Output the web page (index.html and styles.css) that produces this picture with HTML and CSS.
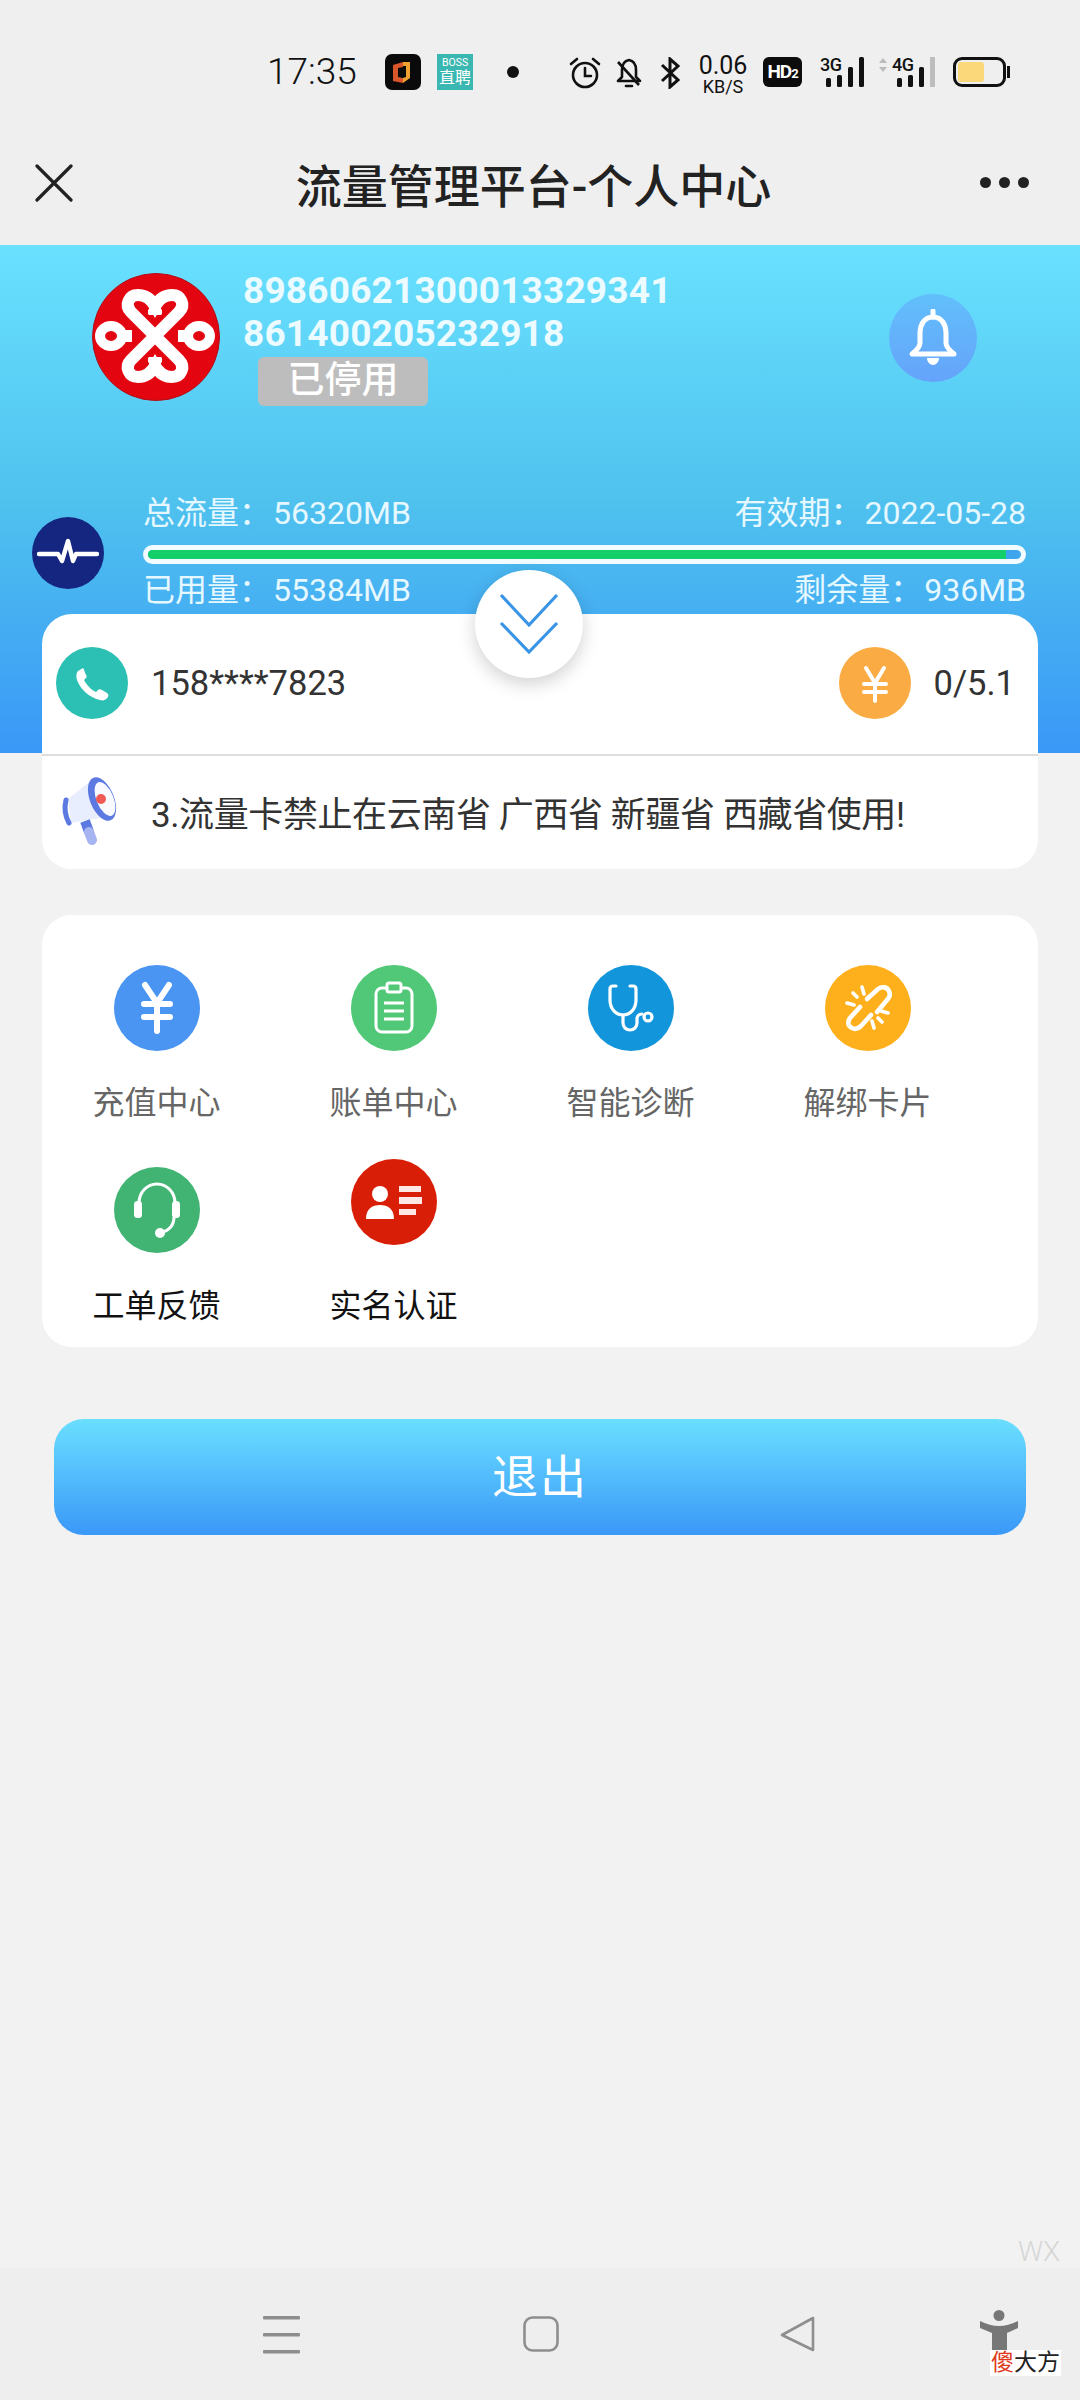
FILE: index.html
```html
<!DOCTYPE html>
<html lang="zh-CN">
<head>
    <meta charset="UTF-8">
    <meta name="viewport" content="width=device-width, initial-scale=1.0">
    <title>流量管理平台-个人中心</title>
    <link rel="stylesheet" href="styles.css">
</head>
<body>
    <div class="statusbar">
        <span class="clock">17:35</span>
        <svg class="app-icon" viewBox="0 0 36 36"><rect width="36" height="36" rx="7" fill="#0a0a0a"/><path d="M8 11l10-3v21l-10-2z" fill="#d9552a"/><path d="M13 14l5-1v11l-5-1z" fill="#0a0a0a"/><path d="M18 8h7v16l-7 5v-5l3-1V12h-3z" fill="#f0a030"/></svg>
        <div class="boss-icon"><span class="boss-top">BOSS</span><span class="boss-bottom">直聘</span></div>
        <span class="status-dot"></span>
        <svg class="alarm" viewBox="0 0 32 32" fill="none" stroke="#111" stroke-width="2.6"><circle cx="16" cy="18" r="12"/><path d="M16 11v8h6M2 7l6-5M30 7l-6-5" stroke-linecap="round"/></svg>
        <svg class="bell-off" viewBox="0 0 26 32" fill="none" stroke="#111" stroke-width="2.6"><path d="M13 3c-5 1-7 5-7 10v7l-4 4h22l-4-4v-7c0-5-2-9-7-10z" stroke-linejoin="round"/><path d="M2 5l21 23"/><path d="M10 29h6" stroke-linecap="round"/></svg>
        <svg class="bt" viewBox="0 0 23 32" fill="none" stroke="#111" stroke-width="3"><path d="M3 8l16 15-8 7V2l8 7L3 24"/></svg>
        <div class="speed"><span class="speed-num">0.06</span><span class="speed-unit">KB/S</span></div>
        <span class="hd">HD<small>2</small></span>
        <div class="signal signal-3g">
            <span class="net">3G</span>
            <svg viewBox="0 0 45 30" class="bars"><g fill="#111"><rect x="6" y="21" width="5" height="9" rx="1.5"/><rect x="17" y="18" width="5" height="12" rx="1.5"/><rect x="28" y="10" width="5" height="20" rx="1.5"/><rect x="39" y="0" width="5" height="30" rx="1.5"/></g></svg>
        </div>
        <div class="signal signal-4g">
            <svg class="net-arrows" viewBox="0 0 8 14" fill="#bbb"><path d="M4 0l4 5H0zM4 14l4-5H0z"/></svg>
            <span class="net">4G</span>
            <svg viewBox="0 0 56 30" class="bars"><g fill="#111"><rect x="18" y="21" width="5" height="9" rx="1.5"/><rect x="29" y="18" width="5" height="12" rx="1.5"/><rect x="40" y="10" width="5" height="20" rx="1.5"/></g><rect x="51" y="0" width="5" height="30" fill="#bdbdbd"/></svg>
        </div>
        <div class="battery"><span class="battery-fill"></span></div>
    </div>

    <header class="topbar">
        <svg class="close-icon" viewBox="0 0 38 38" fill="none" stroke="#222" stroke-width="3.2" stroke-linecap="round"><path d="M2 2l34 34M36 2L2 36"/></svg>
        <h1 class="page-title">流量管理平台-个人中心</h1>
        <div class="more"><span></span><span></span><span></span></div>
    </header>

    <section class="hero">
        <div class="hero-top">
            <svg class="logo" viewBox="0 0 128 128">
                <circle cx="64" cy="64" r="63.5" fill="#e30611" stroke="#b01018"/>
                <g fill="none" stroke="#fff" stroke-width="12" transform="translate(-1 -1)">
                    <path d="M88 88L40 40C33 33 38 23 47 23C54 23 60 27 64 34C68 27 74 23 81 23C90 23 95 33 88 40L40 88C33 95 38 105 47 105C54 105 60 101 64 94C68 101 74 105 81 105C90 105 95 95 88 88Z"/>
                    <ellipse cx="20" cy="64" rx="11" ry="10" stroke-width="10"/>
                    <ellipse cx="108" cy="64" rx="11" ry="10" stroke-width="10"/>
                    <path d="M30 64h11M87 64h11M64 34v9M64 85v9"/>
                    <path d="M57 40h14M57 88h14" stroke-width="5"/>
                </g>
            </svg>
            <div class="sim-info">
                <div class="sim-num">89860621300013329341</div>
                <div class="sim-num">861400205232918</div>
                <span class="sim-state">已停用</span>
            </div>
            <div class="bell-btn">
                <svg viewBox="0 0 50 58" fill="none" stroke="#fff" stroke-width="5" stroke-linejoin="round"><path d="M25 8c-9 0-13 8-13 16v10c0 4-3 7-8 11h42c-5-4-8-7-8-11V24c0-8-4-16-13-16z"/><path d="M25 2v6" stroke-linecap="round"/><path d="M19 49c0 4 3 7 6 7s6-3 6-7z" fill="#fff" stroke="none"/></svg>
            </div>
        </div>

        <div class="usage">
            <svg class="pulse" viewBox="0 0 72 72"><circle cx="36" cy="36" r="36" fill="#152680"/><path d="M7 37h19l4 7 6-20 5 20 3-7h21" fill="none" stroke="#fff" stroke-width="4.4" stroke-linejoin="round" stroke-linecap="round"/></svg>
            <div class="usage-body">
                <div class="usage-row">
                    <span>总流量&#xFF1A;<span class="usage-val">56320MB</span></span>
                    <span>有效期&#xFF1A;<span class="usage-val">2022-05-28</span></span>
                </div>
                <div class="progress"><div class="progress-fill" style="width: 98.3%"></div></div>
                <div class="usage-row">
                    <span>已用量&#xFF1A;<span class="usage-val">55384MB</span></span>
                    <span>剩余量&#xFF1A;<span class="usage-val">936MB</span></span>
                </div>
            </div>
        </div>

        <div class="collapse-btn">
            <svg viewBox="0 0 108 108" fill="none" stroke="#3a94e6" stroke-width="3.2"><path d="M26 25l28 30 28-30M26 53l28 29 28-29"/></svg>
        </div>
    </section>

    <main class="content">
        <section class="card card-sim">
            <div class="phone-row">
                <svg class="round-icon" viewBox="0 0 72 72"><circle cx="36" cy="36" r="36" fill="#2cbfb3"/><path fill="#fff" d="M27 21l-5 3c-2 2-2 6-1 9 3 9 13 18 23 20 3 1 6 0 8-3 1-2 0-3-1-4l-5-3c-2-1-3-1-4 0l-2 2c-5-2-10-8-12-12l2-2c1-1 1-2 0-3l-2-5c0-1-1-2-1-2z"/></svg>
                <span class="phone-num">158****7823</span>
                <svg class="round-icon balance-icon" viewBox="0 0 72 72"><circle cx="36" cy="36" r="36" fill="#fbab43"/><path d="M27 21l9 15 9-15M25 37h22M25 45h22M36 36v18" fill="none" stroke="#fff" stroke-width="4" stroke-linecap="round"/></svg>
                <span class="balance">0/5.1</span>
            </div>
            <div class="notice-row">
                <svg class="horn" viewBox="0 0 58 70">
                    <path d="M33 3L8 23l3 24 41-7z" fill="#e8eefd"/>
                    <path d="M6 24Q3 36 9 47" fill="none" stroke="#5b79e0" stroke-width="5" stroke-linecap="round"/>
                    <path d="M25 45l4 11" stroke="#5b79e0" stroke-width="10"/>
                    <path d="M29 56l3 8" stroke="#a6b4f2" stroke-width="10" stroke-linecap="round"/>
                    <ellipse cx="42" cy="23" rx="12" ry="23" fill="#5b79e0" transform="rotate(-22 42 23)"/>
                    <ellipse cx="45" cy="23" rx="8.5" ry="18" fill="#f7f9ff" transform="rotate(-22 45 23)"/>
                    <circle cx="41" cy="23" r="5" fill="#ef5a55"/>
                </svg>
                <span class="notice-text">3.流量卡禁止在云南省 广西省 新疆省 西藏省使用!</span>
            </div>
        </section>

        <section class="card tiles">
            <div class="tile">
                <svg class="tile-icon" viewBox="0 0 86 86"><circle cx="43" cy="43" r="43" fill="#4a95f2"/><path d="M31 20l12 18 12-18M30 39h26M30 52h26M43 39v27" fill="none" stroke="#fff" stroke-width="6" stroke-linecap="round"/></svg>
                <span class="tile-label">充值中心</span>
            </div>
            <div class="tile">
                <svg class="tile-icon" viewBox="0 0 86 86"><circle cx="43" cy="43" r="43" fill="#51c878"/><g fill="none" stroke="#fff" stroke-width="3"><rect x="25" y="23" width="36" height="44" rx="6"/><rect x="36" y="18" width="14" height="9" rx="2" fill="#51c878"/><path d="M33 38h20M33 46h20M33 54h20"/></g></svg>
                <span class="tile-label">账单中心</span>
            </div>
            <div class="tile">
                <svg class="tile-icon" viewBox="0 0 86 86"><circle cx="43" cy="43" r="43" fill="#1295da"/><g fill="none" stroke="#fff" stroke-width="3.2" stroke-linecap="round"><path d="M28 21h-3c-2 0-3 1-3 3v11c0 9 6 15 13 15s13-6 13-15V24c0-2-1-3-3-3h-3"/><path d="M35 50v8c0 4 3 7 7 7s7-3 7-7v-4c0-3 2-5 5-5"/><circle cx="60" cy="52" r="4"/></g></svg>
                <span class="tile-label">智能诊断</span>
            </div>
            <div class="tile">
                <svg class="tile-icon" viewBox="0 0 86 86"><circle cx="43" cy="43" r="43" fill="#fdb01c"/><g fill="none" stroke="#fff" stroke-width="4.6" stroke-linecap="round"><path d="M42 34L53 24C57 21 62 22 64 26C66 30 64 33 62 35L52 47"/><path d="M35 42L25 53C22 57 23 61 27 63C31 65 34 63 36 61L46 50"/><path d="M28 28l4 4M37 22l2 7M22 38l7 2M63 48l-7-2M57 57l-4-4M49 63l-2-7" stroke-width="3.6"/></g></svg>
                <span class="tile-label">解绑卡片</span>
            </div>
            <div class="tile tile-low">
                <svg class="tile-icon" viewBox="0 0 86 86"><circle cx="43" cy="43" r="43" fill="#41b474"/><path d="M25 36a18 19 0 0 1 36 0M60 50c0 9-6 14-14 16" fill="none" stroke="#fff" stroke-width="3"/><rect x="20" y="34" width="8" height="17" rx="3.5" fill="#fff"/><rect x="58" y="34" width="8" height="17" rx="3.5" fill="#fff"/><circle cx="46" cy="66" r="5" fill="#fff"/></svg>
                <span class="tile-label tile-label-dark">工单反馈</span>
            </div>
            <div class="tile tile-id">
                <svg class="tile-icon" viewBox="0 0 86 86"><circle cx="43" cy="43" r="43" fill="#d81e06"/><circle cx="29" cy="35" r="8" fill="#fff"/><path d="M15 60c0-10 6-14 14-14s14 4 14 14z" fill="#fff"/><path d="M48 27h22v6H48zM48 38h23v7H48zM48 50h17v6H48z" fill="#fde8e6"/></svg>
                <span class="tile-label tile-label-dark">实名认证</span>
            </div>
        </section>

        <button class="logout" type="button">退出</button>
    </main>

    <span class="mark">WX</span>

    <nav class="navbar">
        <svg class="nav-menu" viewBox="0 0 37 38" fill="#8e8e8e"><rect y="0" width="37" height="3.4" rx="1"/><rect y="17" width="37" height="3.4" rx="1"/><rect y="34" width="37" height="3.4" rx="1"/></svg>
        <svg class="nav-home" viewBox="0 0 36 36" fill="none" stroke="#8e8e8e" stroke-width="2.6"><rect x="1.5" y="1.5" width="33" height="33" rx="8"/></svg>
        <svg class="nav-back" viewBox="0 0 36 36" fill="none" stroke="#8e8e8e" stroke-width="2.6" stroke-linejoin="round"><path d="M33 2v32L2 19z"/></svg>
    </nav>

    <div class="badge-person">
        <svg viewBox="0 0 38 46" fill="#777"><ellipse cx="19" cy="5.5" rx="5.5" ry="5.5"/><path d="M0 11q10 5 19 5t19-5v7l-11 5v23H12V23L0 18z"/></svg>
        <span class="badge-name"><b>傻</b>大方</span>
    </div>
</body>
</html>
```

FILE: styles.css
```css
* {
    box-sizing: border-box;
}

body {
    margin: 0;
    width: 1080px;
    height: 2400px;
    overflow: hidden;
    position: relative;
    display: flex;
    flex-direction: column;
    background: #f2f2f2;
    color: #333;
    font-family: Roboto, "Noto Sans CJK SC", sans-serif;
}

/* status bar */
.statusbar {
    height: 120px;
    flex: none;
    padding: 54px 0 0 267px;
    display: flex;
    align-items: flex-start;
    background: #efefef;
    color: #111;
}

.clock {
    width: 118px;
    font-size: 37px;
    line-height: 36px;
    font-weight: 300;
}

.app-icon {
    width: 36px;
    height: 36px;
}

.boss-icon {
    width: 36px;
    height: 36px;
    margin-left: 16px;
    background: #3bb7b2;
    color: #fff;
    display: flex;
    flex-direction: column;
    align-items: center;
    justify-content: center;
}

.boss-top {
    font-size: 10.5px;
    line-height: 12px;
}

.boss-bottom {
    font-size: 16px;
    line-height: 18px;
}

.status-dot {
    width: 12px;
    height: 12px;
    margin: 12px 0 0 34px;
    border-radius: 50%;
    background: #111;
}

.alarm {
    width: 32px;
    height: 32px;
    margin: 3px 0 0 50px;
}

.bell-off {
    width: 26px;
    height: 32px;
    margin: 3px 0 0 15px;
}

.bt {
    width: 23px;
    height: 32px;
    margin: 3px 0 0 17px;
}

.speed {
    width: 52px;
    margin-left: 15px;
    display: flex;
    flex-direction: column;
    align-items: center;
}

.speed-num {
    font-size: 25px;
    line-height: 24px;
}

.speed-unit {
    font-size: 18px;
    line-height: 17px;
}

.hd {
    width: 39px;
    height: 30px;
    margin: 3px 0 0 14px;
    border-radius: 6px;
    background: #0c0c0c;
    color: #fff;
    font-size: 19px;
    line-height: 30px;
    font-weight: 700;
    letter-spacing: -1px;
    text-align: center;
}

.hd small {
    font-size: 13px;
}

.signal {
    position: relative;
    height: 30px;
    margin-top: 3px;
}

.signal-3g {
    width: 45px;
    margin-left: 18px;
}

.signal-4g {
    width: 56px;
    margin-left: 14px;
    padding-left: 13px;
}

.net {
    display: block;
    font-size: 18px;
    line-height: 16px;
    font-weight: 500;
    letter-spacing: -0.5px;
}

.net-arrows {
    position: absolute;
    left: 0;
    top: 1px;
    width: 8px;
    height: 14px;
}

.bars {
    position: absolute;
    left: 0;
    top: 0;
    width: 100%;
    height: 30px;
}

.battery {
    width: 53px;
    height: 30px;
    margin: 3px 0 0 18px;
    padding: 2px;
    border: 3px solid #111;
    border-radius: 9px;
    position: relative;
}

.battery::after {
    content: "";
    position: absolute;
    right: -7px;
    top: 6px;
    width: 3px;
    height: 12px;
    background: #111;
}

.battery-fill {
    display: block;
    width: 26px;
    height: 100%;
    border-radius: 3px;
    background: #fbd97a;
}

/* title row */
.topbar {
    height: 125px;
    flex: none;
    padding: 0 51px 0 35px;
    display: flex;
    align-items: center;
    background: #efefef;
}

.close-icon {
    width: 38px;
    height: 38px;
    flex: none;
}

.page-title {
    flex: 1;
    margin: 0;
    padding-left: 14px;
    font-size: 46px;
    font-weight: 500;
    color: #222;
    text-align: center;
}

.more {
    display: flex;
    gap: 8px;
    flex: none;
}

.more span {
    width: 11px;
    height: 11px;
    border-radius: 50%;
    background: #222;
}

/* blue head */
.hero {
    height: 508px;
    flex: none;
    position: relative;
    background: linear-gradient(180deg, #6ae1ff 0%, #4fc2ee 50%, #3a98f7 100%);
    color: #fff;
}

.hero-top {
    display: flex;
    align-items: flex-start;
    padding: 24px 103px 0 92px;
}

.logo {
    width: 128px;
    height: 128px;
    margin-top: 4px;
    flex: none;
}

.sim-info {
    margin-left: 23px;
}

.sim-num {
    font-size: 37px;
    line-height: 43px;
    font-weight: 700;
    letter-spacing: 0.2px;
    color: #ecfbff;
}

.sim-state {
    display: block;
    width: 170px;
    height: 49px;
    margin: 2px 0 0 15px;
    border-radius: 6px;
    background: #bdbdbd;
    font-size: 37px;
    font-weight: 500;
    line-height: 48px;
    text-align: center;
}

.bell-btn {
    width: 88px;
    height: 88px;
    margin: 25px 0 0 auto;
    border-radius: 50%;
    background: linear-gradient(180deg, #62bffb, #65a3fa);
    display: flex;
    align-items: center;
    justify-content: center;
}

.bell-btn svg {
    width: 50px;
    height: 58px;
}

.usage {
    display: flex;
    align-items: center;
    gap: 39px;
    margin-top: 85px;
    padding: 0 54px 0 32px;
}

.pulse {
    width: 72px;
    height: 72px;
    margin-top: 3px;
    flex: none;
}

.usage-body {
    flex: 1;
}

.usage-row {
    display: flex;
    justify-content: space-between;
    font-size: 32px;
    line-height: 44px;
    color: #e6f8ff;
}

.usage-val {
    margin-left: 2px;
}

.progress {
    height: 19px;
    margin: 10px 0 4px;
    border: 5px solid #f2fbff;
    border-radius: 10px;
    overflow: hidden;
    background: #3fa6ee;
}

.progress-fill {
    height: 100%;
    background: #12cf6a;
}

.collapse-btn {
    position: absolute;
    left: 475px;
    top: 325px;
    z-index: 2;
    width: 108px;
    height: 108px;
    border-radius: 50%;
    background: #fff;
    box-shadow: 0 6px 18px rgba(0, 0, 0, 0.18);
}

.collapse-btn svg {
    display: block;
    width: 108px;
    height: 108px;
}

/* cards */
.content {
    position: relative;
    margin-top: -139px;
    padding: 0 42px;
}

.card {
    background: #fff;
    border-radius: 30px;
}

.phone-row {
    height: 142px;
    padding: 0 23px 2px 14px;
    display: flex;
    align-items: center;
    border-bottom: 2px solid #dedede;
}

.round-icon {
    width: 72px;
    height: 72px;
    flex: none;
}

.phone-num {
    margin-left: 23px;
    font-size: 34.5px;
}

.balance-icon {
    margin-left: auto;
}

.balance {
    margin-left: 23px;
    font-size: 34.5px;
}

.notice-row {
    height: 113px;
    padding: 0 0 3px 18px;
    display: flex;
    align-items: center;
}

.horn {
    width: 58px;
    height: 70px;
    flex: none;
}

.notice-text {
    margin-left: 33px;
    font-size: 35px;
    white-space: nowrap;
    letter-spacing: -0.4px;
}

.tiles {
    margin-top: 46px;
    padding: 50px 0 19px;
    display: grid;
    grid-template-columns: repeat(4, 229px);
    column-gap: 8px;
    row-gap: 34px;
}

.tile {
    display: flex;
    flex-direction: column;
    align-items: center;
}

.tile-icon {
    width: 86px;
    height: 86px;
}

.tile-label {
    margin-top: 30px;
    font-size: 32px;
    line-height: 44px;
    color: #666;
}

.tile-label-dark {
    color: #111;
}

.tile-low .tile-icon {
    margin-top: 8px;
}

.tile-low .tile-label {
    margin-top: 31px;
}

.tile-id .tile-label {
    margin-top: 39px;
}

.logout {
    display: block;
    width: 972px;
    height: 116px;
    margin: 72px 0 0 12px;
    padding: 0 0 8px;
    border: none;
    border-radius: 30px;
    background: linear-gradient(180deg, #6adfff, #3a98f8);
    color: #fff;
    font-family: inherit;
    font-size: 46px;
    letter-spacing: 2px;
}

/* bottom */
.mark {
    position: absolute;
    left: 1018px;
    top: 2236px;
    font-size: 28px;
    line-height: 32px;
    font-weight: 300;
    color: #d6d6d6;
}

.navbar {
    height: 132px;
    margin-top: auto;
    flex: none;
    display: flex;
    align-items: flex-start;
    padding: 48px 0 0 263px;
    background: #eeeeee;
}

.nav-menu {
    width: 37px;
    height: 38px;
}

.nav-home {
    width: 36px;
    height: 36px;
    margin-left: 223px;
}

.nav-back {
    width: 36px;
    height: 36px;
    margin-left: 221px;
}

.badge-person {
    position: absolute;
    left: 980px;
    top: 2310px;
    width: 80px;
}

.badge-person svg {
    display: block;
    width: 38px;
    height: 46px;
}

.badge-name {
    position: absolute;
    left: 10px;
    top: 40px;
    padding: 0 1px;
    background: #fff;
    font-size: 23px;
    line-height: 26px;
    white-space: nowrap;
    color: #222;
}

.badge-name b {
    font-weight: 400;
    color: #e0391c;
}
```
